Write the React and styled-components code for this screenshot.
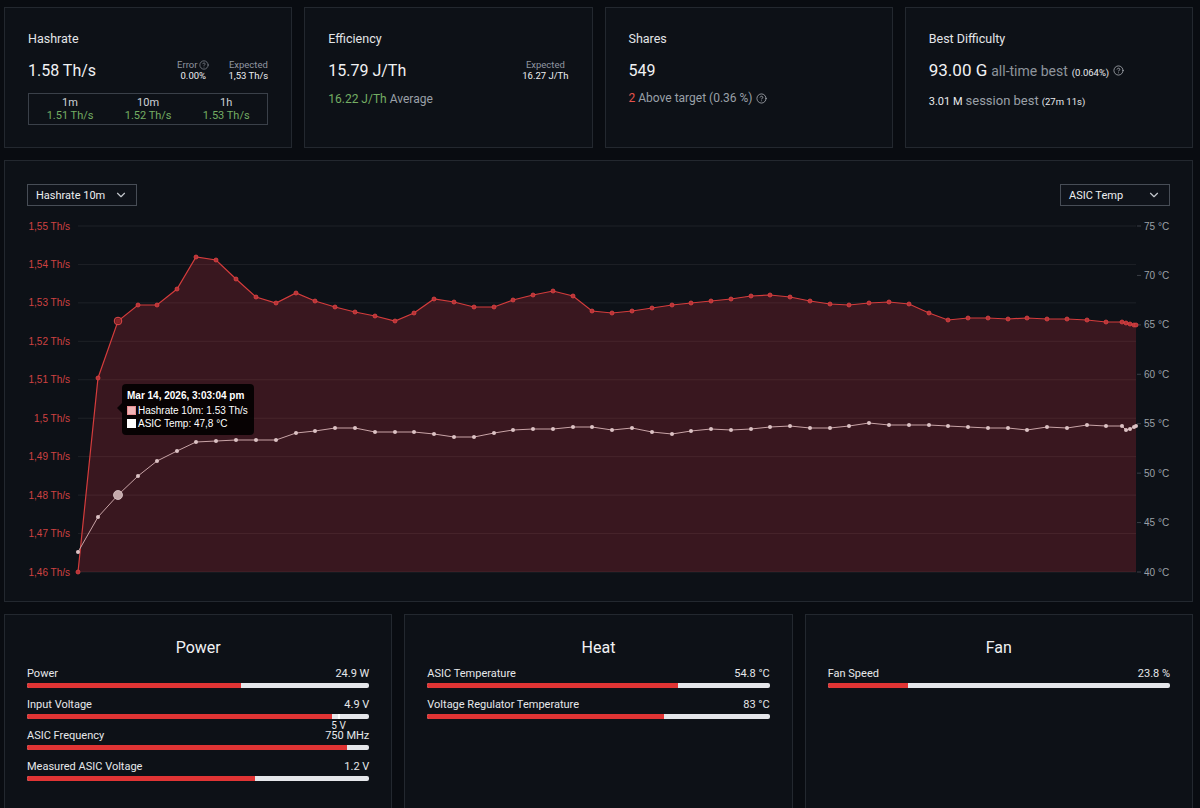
import React from 'react'
import styled, { createGlobalStyle } from 'styled-components'
import { ChevronDown, CircleHelp } from 'lucide-react'

const GlobalStyle = createGlobalStyle`
  body {
    margin: 0;
    background: #090c11;
    font-family: Roboto, 'Noto Sans', sans-serif;
    color: #e8eaed;
  }
`

const Page = styled.div`
  padding: 7px 7px 0 4px;
  display: flex;
  flex-direction: column;
  gap: 12px;
  height: 808px;
  box-sizing: border-box;
  overflow: hidden;
  & > * {
    flex-shrink: 0;
  }
`

const TopGrid = styled.div`
  display: grid;
  grid-template-columns: repeat(4, 1fr);
  gap: 12px;
`

const Card = styled.div`
  position: relative;
  background: #0d1117;
  border: 1px solid #23282f;
  box-sizing: border-box;
`

const StatCard = styled(Card)`
  height: 141px;
  padding: 24px 23px 0 23px;
`

const Title = styled.div`
  font-size: 12.5px;
  line-height: 14px;
  color: #e3e5e8;
`

const ValueRow = styled.div`
  display: flex;
  align-items: center;
  justify-content: space-between;
  margin-top: 12px;
  height: 24px;
`

const BigValue = styled.div`
  font-size: ${p => p.$size || 16}px;
  font-weight: 400;
  color: #f1f2f4;
  white-space: nowrap;
  display: flex;
  align-items: baseline;
  gap: 4px;
`

const SideStats = styled.div`
  display: flex;
  gap: 19px;
`

const SideStat = styled.div`
  display: flex;
  flex-direction: column;
  align-items: center;
  line-height: 11px;
  font-size: 9.5px;
`

const SideLabel = styled.span`
  color: #9096a0;
  display: flex;
  align-items: center;
  gap: 2px;
`

const SideValue = styled.span`
  color: #eceef0;
`

const SubBox = styled.div`
  margin-top: 11px;
  height: 32px;
  box-sizing: border-box;
  border: 1px solid #3a4049;
  display: grid;
  grid-template-columns: repeat(3, 1fr);
  align-items: center;
  padding: 0 2px;
`

const SubCell = styled.div`
  display: flex;
  flex-direction: column;
  align-items: center;
  font-size: 11px;
  line-height: 13px;
  color: #cfd3d8;
`

const Green = styled.span`
  color: #74ad63;
`

const Red = styled.span`
  color: #e5534b;
`

const Note = styled.div`
  margin-top: ${p => p.$mt || 10}px;
  font-size: ${p => p.$size || 12}px;
  line-height: 14px;
  color: #9aa0a8;
  display: flex;
  align-items: baseline;
  gap: 3px;
  white-space: nowrap;
`

const Small = styled.span`
  font-size: ${p => p.$size || 10}px;
  color: ${p => p.$color || '#e8eaed'};
`

const Muted = styled.span`
  font-size: ${p => p.$size || 14}px;
  font-weight: 400;
  color: #8e949c;
`

const Help = styled(CircleHelp)`
  align-self: center;
  color: #b8bcc2;
`

const ChartCard = styled(Card)`
  height: 442px;
`

const ChartHeader = styled.div`
  display: flex;
  justify-content: space-between;
  padding: 23px 22px 0 22px;
`

const Select = styled.div`
  width: 110px;
  height: 22px;
  box-sizing: border-box;
  border: 1px solid #474d56;
  background: #0f131a;
  display: flex;
  align-items: center;
  justify-content: space-between;
  padding: 0 8px 0 8px;
  font-size: 11px;
  color: #eceef0;
`

const ChartSvg = styled.svg`
  display: block;
  margin-top: 8px;
`

const Tooltip = styled.div`
  position: absolute;
  left: 117px;
  top: 223px;
  box-sizing: border-box;
  padding: 5px 6px 5px 5px;
  background: rgba(0, 0, 0, 0.88);
  border-radius: 4px;
  font-family: 'Liberation Sans', Arial, sans-serif;
  font-size: 10px;
  color: #fff;
  white-space: nowrap;
  &::before {
    content: '';
    position: absolute;
    left: -5px;
    top: 19px;
    border: 5px solid transparent;
    border-left: 0;
    border-right-color: rgba(0, 0, 0, 0.88);
  }
`

const TipTitle = styled.div`
  font-weight: 700;
  font-size: 10px;
  line-height: 13px;
  margin-bottom: 2px;
`

const TipRow = styled.div`
  display: flex;
  align-items: center;
  gap: 2px;
  line-height: 13px;
`

const Swatch = styled.span`
  width: 9px;
  height: 9px;
  box-sizing: border-box;
  background: ${p => p.$fill};
  border: 1px solid ${p => p.$border};
`

const BottomGrid = styled.div`
  display: grid;
  grid-template-columns: repeat(3, 1fr);
  gap: 12px;
`

const GaugeCard = styled(Card)`
  height: 210px;
  padding: 24px 22px 0 22px;
`

const GaugeTitle = styled.div`
  text-align: center;
  font-size: 16px;
  line-height: 18px;
  color: #f1f2f4;
  margin-bottom: 10px;
`

const Gauge = styled.div`
  position: relative;
  height: 31px;
`

const GaugeLabels = styled.div`
  display: flex;
  justify-content: space-between;
  font-size: 11px;
  line-height: 13px;
  color: #e6e8eb;
`

const Track = styled.div`
  position: relative;
  margin-top: 3px;
  height: 5px;
  border-radius: 2px;
  background: #e4e6ea;
  overflow: visible;
`

const Fill = styled.div`
  height: 100%;
  border-radius: 2px 0 0 2px;
  background: #e03434;
`

const Marker = styled.div`
  position: absolute;
  top: 0;
  width: 2px;
  height: 5px;
  background: #ffffff;
  transform: translateX(-1px);
`

const MarkerLabel = styled.span`
  position: absolute;
  top: 6px;
  transform: translateX(-50%);
  font-size: 10px;
  line-height: 11px;
  color: #e6e8eb;
  white-space: nowrap;
`

// chart data in page pixel coordinates
const hashPts = [
  [78, 572], [98, 378], [118, 321], [138, 305], [157, 305], [177, 289], [196, 257], [216, 260],
  [236, 279], [256, 297], [276, 303], [296, 293], [315, 301], [335, 307], [355, 312], [375, 316],
  [395, 321], [414, 313], [434, 299], [454, 302], [474, 307], [494, 307], [513, 300], [533, 295],
  [553, 291], [573, 296], [592, 311], [612, 313], [632, 311], [652, 308], [672, 305], [691, 303],
  [711, 301], [731, 299], [751, 296], [770, 295], [790, 297], [810, 301], [830, 304], [849, 305],
  [869, 303], [889, 302], [909, 304], [929, 313], [948, 320], [968, 318], [988, 318], [1008, 319],
  [1027, 318], [1047, 319], [1067, 319], [1087, 320], [1106, 322], [1122, 322], [1126, 323],
  [1130, 324], [1134, 325], [1136, 325]
]

const tempPts = [
  [78, 552], [98, 517], [118, 495], [138, 476], [157, 461], [177, 451], [196, 442], [216, 441],
  [236, 440], [256, 440], [276, 440], [296, 433], [315, 431], [335, 428], [355, 428], [375, 432],
  [395, 432], [414, 432], [434, 434], [454, 437], [474, 437], [494, 433], [513, 430], [533, 429],
  [553, 429], [573, 427], [592, 427], [612, 430], [632, 428], [652, 432], [672, 434], [691, 431],
  [711, 429], [731, 430], [751, 429], [770, 427], [790, 426], [810, 428], [830, 428], [849, 426],
  [869, 423], [889, 425], [909, 425], [929, 425], [948, 426], [968, 427], [988, 428], [1008, 428],
  [1027, 430], [1047, 427], [1067, 428], [1087, 425], [1106, 426], [1122, 426], [1126, 430],
  [1130, 429], [1134, 427], [1136, 426]
]

const leftTicks = ['1,55', '1,54', '1,53', '1,52', '1,51', '1,5', '1,49', '1,48', '1,47', '1,46']
const rightTicks = ['75', '70', '65', '60', '55', '50', '45', '40']

const line = pts => pts.map((p, i) => `${i ? 'L' : 'M'}${p[0]},${p[1]}`).join(' ')

const Chart = () => {
  const top = 226
  const bottom = 572
  const leftStep = (bottom - top) / 9
  const rightStep = (bottom - top) / 7
  return (
    <ChartSvg width="1187" height="370" viewBox="5 214 1187 370">
      {leftTicks.map((t, i) => (
        <g key={t}>
          <line x1="78" x2="1136" y1={top + i * leftStep} y2={top + i * leftStep} stroke="rgba(255,255,255,0.07)" />
          <text x="70" y={top + i * leftStep + 3.5} textAnchor="end" fontSize="10" fill="#cf4242" fontFamily="'Liberation Sans', Arial, sans-serif">
            {t} Th/s
          </text>
        </g>
      ))}
      {rightTicks.map((t, i) => (
        <g key={t}>
          <line x1="1137" x2="1141" y1={top + i * rightStep} y2={top + i * rightStep} stroke="#3a3f46" />
          <text x="1144" y={top + i * rightStep + 3.5} fontSize="10" fill="#9ba0a7" fontFamily="'Liberation Sans', Arial, sans-serif">
            {t} °C
          </text>
        </g>
      ))}
      <path d={`${line(hashPts)} L1136,${bottom} L78,${bottom} Z`} fill="rgba(200,48,58,0.24)" />
      <path d={line(hashPts)} fill="none" stroke="#d43c3c" strokeWidth="1.2" />
      {hashPts.map(([x, y], i) => (
        <circle key={i} cx={x} cy={y} r="2" fill="#b83236" stroke="#de4545" strokeWidth="0.8" />
      ))}
      <circle cx="118" cy="321" r="3.8" fill="rgba(120,30,35,0.8)" stroke="#e04848" strokeWidth="1" />
      <path d={line(tempPts)} fill="none" stroke="#c9a4a7" strokeWidth="1" />
      {tempPts.map(([x, y], i) => (
        <circle key={i} cx={x} cy={y} r="2" fill="#dcc2c4" />
      ))}
      <circle cx="118" cy="495" r="4.5" fill="#c4a9ab" stroke="#e0cccd" strokeWidth="0.8" />
    </ChartSvg>
  )
}

const gauges = {
  Power: [
    { label: 'Power', value: '24.9 W', pct: 62.4 },
    { label: 'Input Voltage', value: '4.9 V', pct: 89, marker: { pct: 91, label: '5 V' } },
    { label: 'ASIC Frequency', value: '750 MHz', pct: 93.6 },
    { label: 'Measured ASIC Voltage', value: '1.2 V', pct: 66.5 }
  ],
  Heat: [
    { label: 'ASIC Temperature', value: '54.8 °C', pct: 73.2 },
    { label: 'Voltage Regulator Temperature', value: '83 °C', pct: 69.2 }
  ],
  Fan: [{ label: 'Fan Speed', value: '23.8 %', pct: 23.6 }]
}

const App = () => {
  return (
    <>
      <GlobalStyle />
      <Page>
        <TopGrid>
          <StatCard>
            <Title>Hashrate</Title>
            <ValueRow>
              <BigValue>1.58 Th/s</BigValue>
              <SideStats>
                <SideStat>
                  <SideLabel>
                    Error <CircleHelp size={10} strokeWidth={1.6} />
                  </SideLabel>
                  <SideValue>0.00%</SideValue>
                </SideStat>
                <SideStat>
                  <SideLabel>Expected</SideLabel>
                  <SideValue>1,53 Th/s</SideValue>
                </SideStat>
              </SideStats>
            </ValueRow>
            <SubBox>
              <SubCell>1m<Green>1.51 Th/s</Green></SubCell>
              <SubCell>10m<Green>1.52 Th/s</Green></SubCell>
              <SubCell>1h<Green>1.53 Th/s</Green></SubCell>
            </SubBox>
          </StatCard>

          <StatCard>
            <Title>Efficiency</Title>
            <ValueRow>
              <BigValue>15.79 J/Th</BigValue>
              <SideStat>
                <SideLabel>Expected</SideLabel>
                <SideValue>16.27 J/Th</SideValue>
              </SideStat>
            </ValueRow>
            <Note $mt={10}>
              <Green>16.22 J/Th</Green> Average
            </Note>
          </StatCard>

          <StatCard>
            <Title>Shares</Title>
            <ValueRow>
              <BigValue>549</BigValue>
            </ValueRow>
            <Note $mt={9}>
              <Red>2</Red> Above target (0.36 %) <Help size={11} strokeWidth={1.6} />
            </Note>
          </StatCard>

          <StatCard>
            <Title>Best Difficulty</Title>
            <ValueRow>
              <BigValue $size={17}>
                93.00 G <Muted>all-time best</Muted>
                <Small $size={9.5}>(0.064%)</Small>
                <Help size={11} strokeWidth={1.6} />
              </BigValue>
            </ValueRow>
            <Note $mt={12} $size={13}>
              <Small $size={11}>3.01 M</Small> session best <Small $size={9.5}>(27m 11s)</Small>
            </Note>
          </StatCard>
        </TopGrid>

        <ChartCard>
          <ChartHeader>
            <Select>
              Hashrate 10m <ChevronDown size={14} color="#c3c7cc" />
            </Select>
            <Select>
              ASIC Temp <ChevronDown size={14} color="#c3c7cc" />
            </Select>
          </ChartHeader>
          <Chart />
          <Tooltip>
            <TipTitle>Mar 14, 2026, 3:03:04 pm</TipTitle>
            <TipRow>
              <Swatch $fill="#f0b4b6" $border="#e88c90" /> Hashrate 10m: 1.53 Th/s
            </TipRow>
            <TipRow>
              <Swatch $fill="#ffffff" $border="#ffffff" /> ASIC Temp: 47,8 °C
            </TipRow>
          </Tooltip>
        </ChartCard>

        <BottomGrid>
          {Object.entries(gauges).map(([title, rows]) => (
            <GaugeCard key={title}>
              <GaugeTitle>{title}</GaugeTitle>
              {rows.map(r => (
                <Gauge key={r.label}>
                  <GaugeLabels>
                    <span>{r.label}</span>
                    <span>{r.value}</span>
                  </GaugeLabels>
                  <Track>
                    <Fill style={{ width: `${r.pct}%` }} />
                    {r.marker && (
                      <>
                        <Marker style={{ left: `${r.marker.pct}%` }} />
                        <MarkerLabel style={{ left: `${r.marker.pct}%` }}>{r.marker.label}</MarkerLabel>
                      </>
                    )}
                  </Track>
                </Gauge>
              ))}
            </GaugeCard>
          ))}
        </BottomGrid>
      </Page>
    </>
  )
}

export default App
